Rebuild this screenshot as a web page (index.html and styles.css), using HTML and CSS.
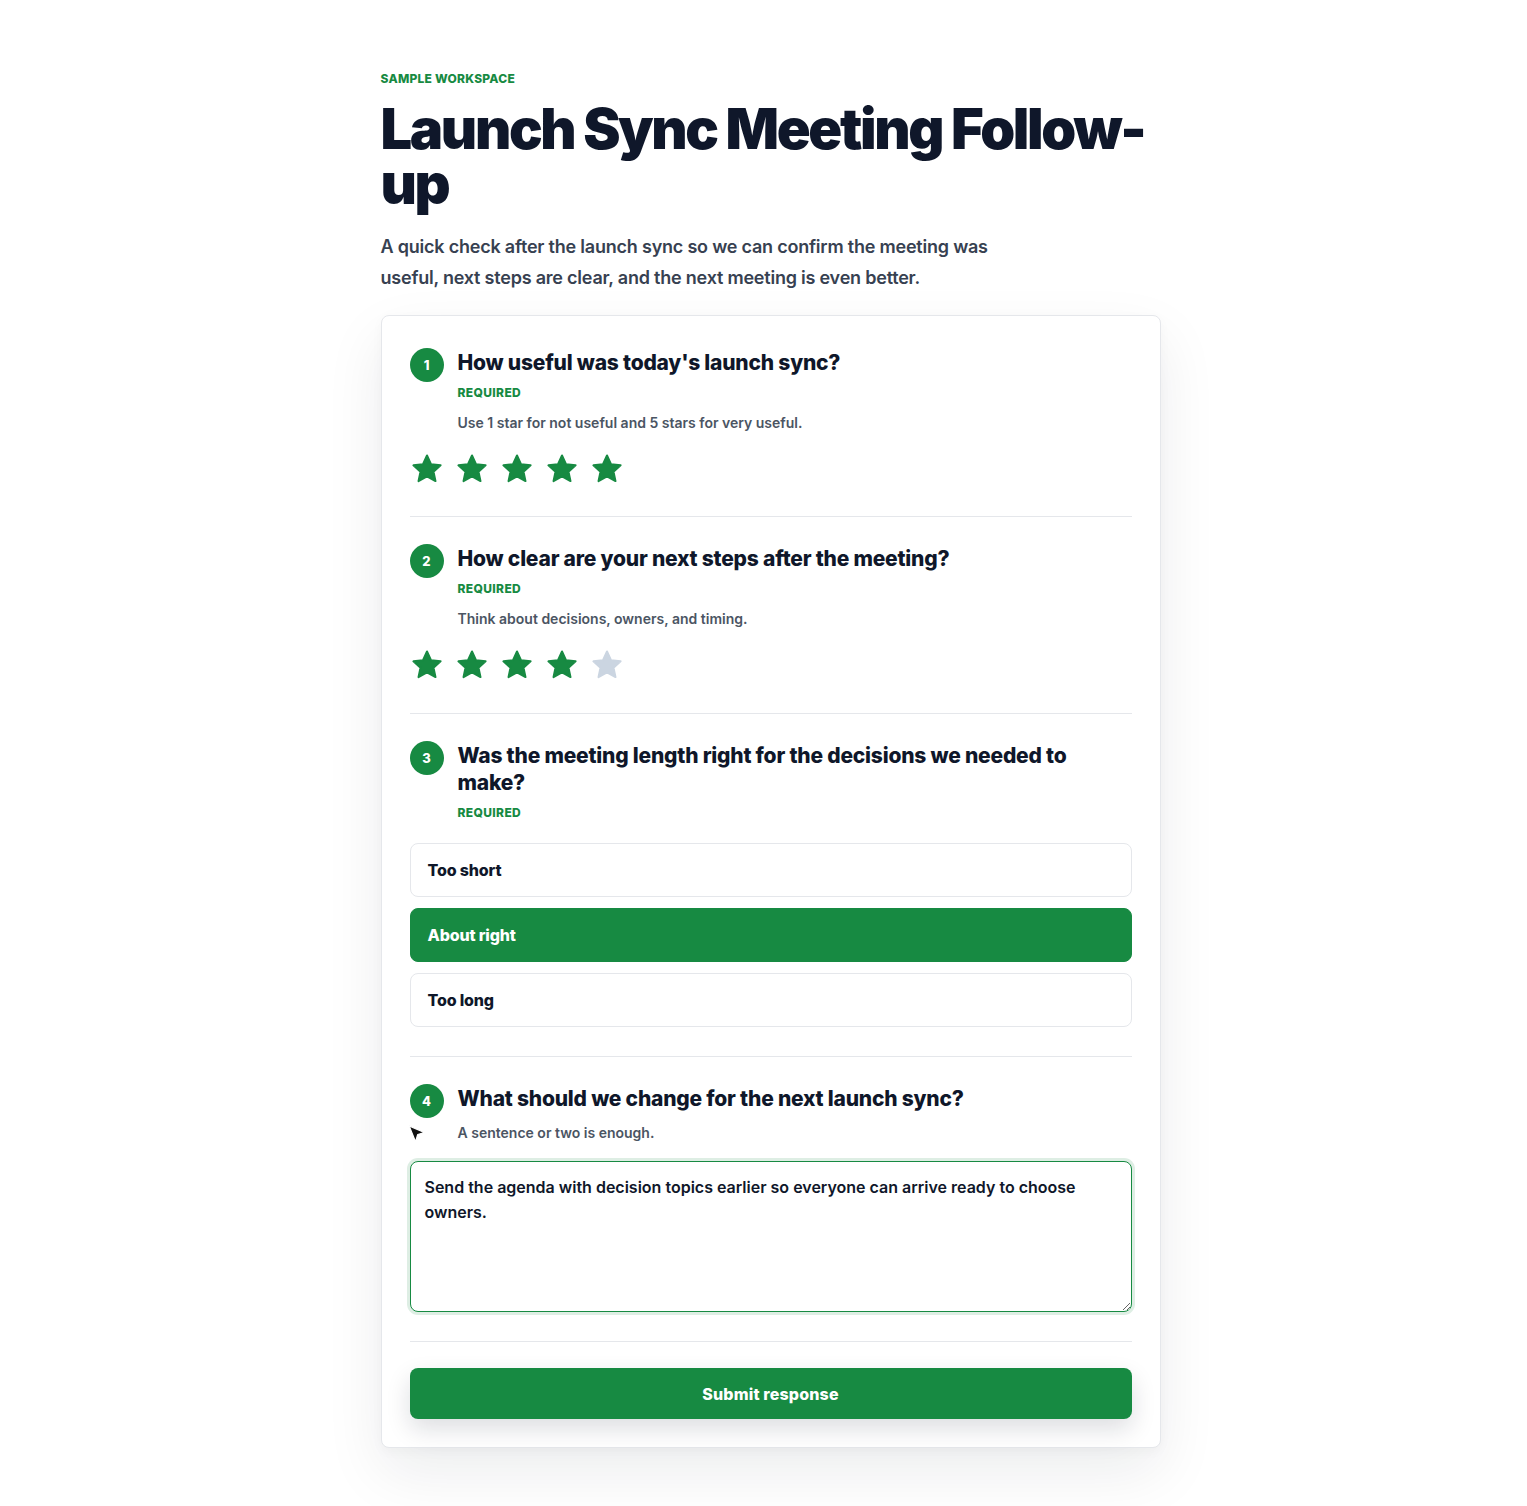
FILE: index.html
```html
<!DOCTYPE html>
<html lang="en">
<head>
<meta charset="utf-8">
<title>Launch Sync Meeting Follow-up</title>
<link rel="stylesheet" href="styles.css">
</head>
<body>
<main class="page">
  <p class="eyebrow">SAMPLE WORKSPACE</p>
  <h1 class="title">Launch Sync Meeting Follow-up</h1>
  <p class="intro">A quick check after the launch sync so we can confirm the meeting was useful, next steps are clear, and the next meeting is even better.</p>

  <form class="card">
    <section class="question first">
      <div class="q-head">
        <span class="q-num">1</span>
        <div class="q-text">
          <h2 class="q-title">How useful was today's launch sync?</h2>
          <p class="q-req">REQUIRED</p>
          <p class="q-hint">Use 1 star for not useful and 5 stars for very useful.</p>
        </div>
      </div>
      <div class="stars">
        <svg class="star on" viewBox="0 0 32 32"><polygon points="16,2.5 20.1,11.3 29.6,12.3 22.5,18.7 24.5,28.1 16,23.3 7.5,28.1 9.5,18.7 2.4,12.3 11.9,11.3"/></svg>
        <svg class="star on" viewBox="0 0 32 32"><polygon points="16,2.5 20.1,11.3 29.6,12.3 22.5,18.7 24.5,28.1 16,23.3 7.5,28.1 9.5,18.7 2.4,12.3 11.9,11.3"/></svg>
        <svg class="star on" viewBox="0 0 32 32"><polygon points="16,2.5 20.1,11.3 29.6,12.3 22.5,18.7 24.5,28.1 16,23.3 7.5,28.1 9.5,18.7 2.4,12.3 11.9,11.3"/></svg>
        <svg class="star on" viewBox="0 0 32 32"><polygon points="16,2.5 20.1,11.3 29.6,12.3 22.5,18.7 24.5,28.1 16,23.3 7.5,28.1 9.5,18.7 2.4,12.3 11.9,11.3"/></svg>
        <svg class="star on" viewBox="0 0 32 32"><polygon points="16,2.5 20.1,11.3 29.6,12.3 22.5,18.7 24.5,28.1 16,23.3 7.5,28.1 9.5,18.7 2.4,12.3 11.9,11.3"/></svg>
      </div>
    </section>

    <section class="question">
      <div class="q-head">
        <span class="q-num">2</span>
        <div class="q-text">
          <h2 class="q-title">How clear are your next steps after the meeting?</h2>
          <p class="q-req">REQUIRED</p>
          <p class="q-hint">Think about decisions, owners, and timing.</p>
        </div>
      </div>
      <div class="stars">
        <svg class="star on" viewBox="0 0 32 32"><polygon points="16,2.5 20.1,11.3 29.6,12.3 22.5,18.7 24.5,28.1 16,23.3 7.5,28.1 9.5,18.7 2.4,12.3 11.9,11.3"/></svg>
        <svg class="star on" viewBox="0 0 32 32"><polygon points="16,2.5 20.1,11.3 29.6,12.3 22.5,18.7 24.5,28.1 16,23.3 7.5,28.1 9.5,18.7 2.4,12.3 11.9,11.3"/></svg>
        <svg class="star on" viewBox="0 0 32 32"><polygon points="16,2.5 20.1,11.3 29.6,12.3 22.5,18.7 24.5,28.1 16,23.3 7.5,28.1 9.5,18.7 2.4,12.3 11.9,11.3"/></svg>
        <svg class="star on" viewBox="0 0 32 32"><polygon points="16,2.5 20.1,11.3 29.6,12.3 22.5,18.7 24.5,28.1 16,23.3 7.5,28.1 9.5,18.7 2.4,12.3 11.9,11.3"/></svg>
        <svg class="star off" viewBox="0 0 32 32"><polygon points="16,2.5 20.1,11.3 29.6,12.3 22.5,18.7 24.5,28.1 16,23.3 7.5,28.1 9.5,18.7 2.4,12.3 11.9,11.3"/></svg>
      </div>
    </section>

    <section class="question">
      <div class="q-head">
        <span class="q-num">3</span>
        <div class="q-text">
          <h2 class="q-title">Was the meeting length right for the decisions we needed to make?</h2>
          <p class="q-req">REQUIRED</p>
        </div>
      </div>
      <div class="options">
        <div class="option">Too short</div>
        <div class="option selected">About right</div>
        <div class="option">Too long</div>
      </div>
    </section>

    <section class="question">
      <div class="q-head">
        <span class="q-num">4</span>
        <div class="q-text">
          <h2 class="q-title">What should we change for the next launch sync?</h2>
          <p class="q-hint q-hint-tight">A sentence or two is enough.</p>
        </div>
      </div>
      <textarea class="answer">Send the agenda with decision topics earlier so everyone can arrive ready to choose owners.</textarea>
      <svg class="pointer" viewBox="0 0 16 18"><path d="M1.5 1.5 L14 7 L8.6 8.6 L6.8 14.5 Z" fill="#111" stroke="#fff" stroke-width="1" stroke-linejoin="round"/></svg>
    </section>

    <div class="submit-row">
      <button type="button" class="submit">Submit response</button>
    </div>
  </form>
</main>
</body>
</html>
```

FILE: styles.css
```css
* { box-sizing: border-box; }

html, body {
  margin: 0;
  background: #ffffff;
}

body {
  font-family: Inter, "Noto Sans", "Liberation Sans", sans-serif;
  color: #0f172a;
  padding: 71px 0 58px 14px;
}

.page {
  width: 780px;
  margin: 0 auto;
}

.eyebrow {
  margin: 0;
  font-size: 12px;
  line-height: 16px;
  font-weight: 800;
  letter-spacing: 0.02em;
  color: #178a42;
}

.title {
  margin: 15px 0 0;
  max-width: 780px;
  font-size: 56px;
  line-height: 55px;
  font-weight: 900;
  letter-spacing: -0.042em;
  color: #0f172a;
}

.intro {
  margin: 19px 0 0;
  max-width: 640px;
  font-size: 18px;
  line-height: 31px;
  font-weight: 600;
  letter-spacing: -0.012em;
  color: #374151;
}

.card {
  margin-top: 22px;
  background: #fff;
  border: 1px solid #e5e7eb;
  border-radius: 8px;
  padding: 5px 28px 28px;
  box-shadow: 0 24px 60px rgba(15, 23, 42, 0.08), 0 4px 12px rgba(15, 23, 42, 0.03);
}

.question {
  position: relative;
  padding: 27px 0 29px;
  border-bottom: 1px solid #e5e7eb;
}

.question.first { padding-bottom: 28px; }

.q-head {
  display: flex;
  align-items: flex-start;
  gap: 14px;
}

.q-num {
  flex: none;
  width: 34px;
  height: 34px;
  border-radius: 50%;
  background: #178a42;
  color: #fff;
  font-size: 13px;
  font-weight: 800;
  display: flex;
  align-items: center;
  justify-content: center;
}

.q-text {
  flex: 1;
  min-width: 0;
  padding-top: 1px;
}

.q-title {
  margin: 0;
  font-size: 21px;
  line-height: 27px;
  font-weight: 800;
  letter-spacing: -0.01em;
  color: #0f172a;
}

.q-req {
  margin: 9px 0 0;
  font-size: 12px;
  line-height: 16px;
  font-weight: 800;
  letter-spacing: 0.03em;
  color: #178a42;
}

.q-hint {
  margin: 12px 0 0;
  font-size: 14px;
  line-height: 20px;
  font-weight: 600;
  color: #4b5563;
}

.q-hint-tight { margin-top: 11px; }

.stars {
  display: flex;
  gap: 13px;
  margin-top: 17px;
  padding-left: 1px;
}

.star {
  width: 32px;
  height: 38px;
}

.star polygon {
  stroke-width: 2;
  stroke-linejoin: round;
}

.star.on polygon { fill: #178a42; stroke: #178a42; }
.star.off polygon { fill: #cbd5e1; stroke: #cbd5e1; }

.options {
  display: flex;
  flex-direction: column;
  gap: 11px;
  margin-top: 22px;
}

.option {
  height: 54px;
  display: flex;
  align-items: center;
  padding: 0 17px;
  border: 1px solid #e5e7eb;
  border-radius: 8px;
  font-size: 16px;
  font-weight: 800;
  letter-spacing: -0.01em;
  color: #0f172a;
  background: #fff;
}

.option.selected {
  background: #178a42;
  border-color: #178a42;
  color: #fff;
}

.answer {
  display: block;
  width: 100%;
  height: 151px;
  margin-top: 18px;
  padding: 13px 14px;
  border: 1px solid #178a42;
  border-radius: 8px;
  box-shadow: 0 0 0 3px rgba(23, 138, 66, 0.14);
  font-family: Inter, "Noto Sans", "Liberation Sans", sans-serif;
  font-size: 16px;
  line-height: 25px;
  font-weight: 600;
  color: #0f172a;
  resize: vertical;
  outline: none;
}

.pointer {
  position: absolute;
  left: -3px;
  top: 67px;
  width: 20px;
  height: 22px;
}

.submit-row {
  padding-top: 26px;
}

.submit {
  display: block;
  width: 100%;
  height: 51px;
  border: 0;
  border-radius: 8px;
  background: #178a42;
  color: #fff;
  font-family: Inter, "Noto Sans", "Liberation Sans", sans-serif;
  font-size: 16px;
  font-weight: 800;
  letter-spacing: 0.01em;
  box-shadow: 0 10px 24px rgba(15, 23, 42, 0.14);
  cursor: pointer;
}
```
